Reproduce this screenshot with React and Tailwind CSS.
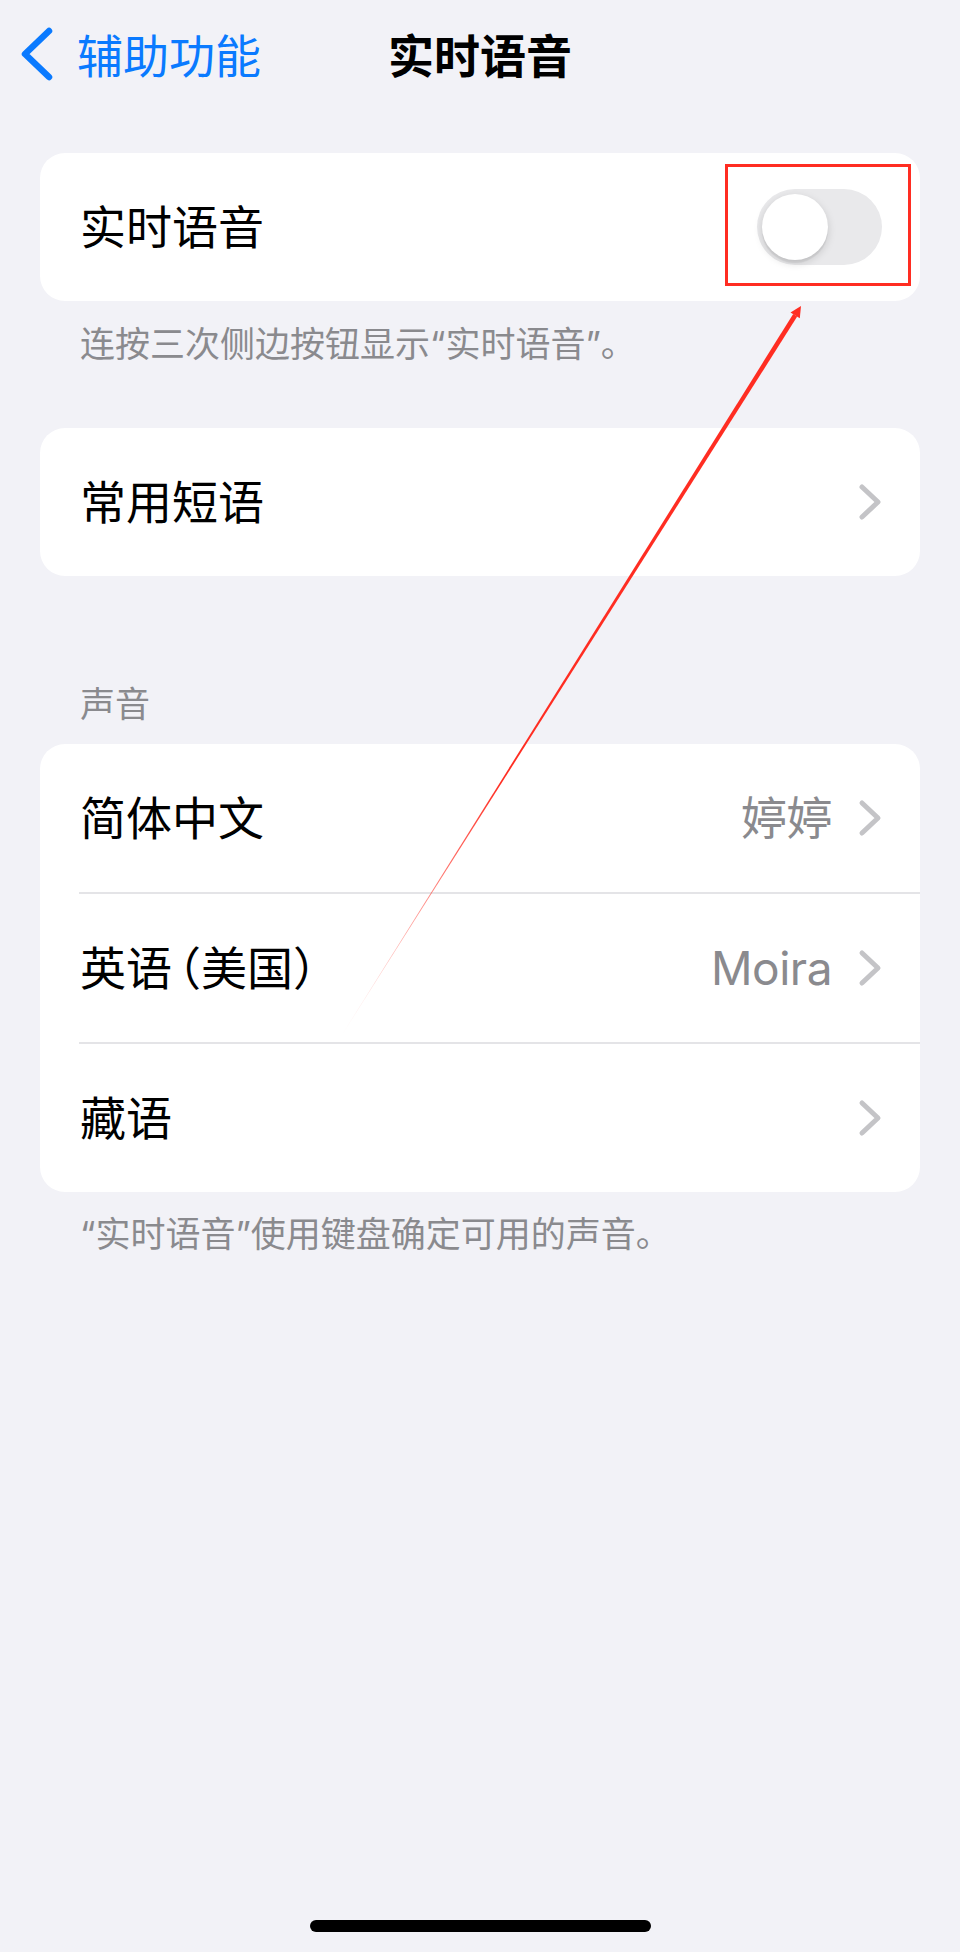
import React from "react";

const font = "font-['Inter','Noto_Sans_CJK_SC',sans-serif]";

function Chevron() {
  return (
    <svg width="24" height="40" viewBox="0 0 24 40" className="shrink-0">
      <polyline
        points="4,5 20,20 4,35"
        fill="none"
        stroke="#c4c4c7"
        strokeWidth="5"
        strokeLinecap="round"
        strokeLinejoin="round"
      />
    </svg>
  );
}

function Row({ label, value, last }) {
  return (
    <>
      <div className="flex h-[148px] items-center justify-between pl-[40px] pr-[38px]">
        <span className="text-[46px] leading-none text-black">{label}</span>
        <div className="flex items-center gap-[26px]">
          {value && (
            <span className="text-[46px] leading-none tracking-[-0.5px] text-[#8a8a8e]">{value}</span>
          )}
          <Chevron />
        </div>
      </div>
      {!last && <div className="ml-[39px] h-[2px] bg-[#e4e4e7]" />}
    </>
  );
}

function Toggle() {
  return (
    <div className="flex h-[76px] w-[125px] items-center rounded-full bg-[#e9e9eb] p-[5px]">
      <div className="h-[66px] w-[66px] rounded-full bg-white shadow-[0_3px_8px_rgba(0,0,0,0.15),0_3px_1px_rgba(0,0,0,0.06)]" />
    </div>
  );
}

export default function App() {
  return (
    <div className={`relative h-[1952px] w-[960px] overflow-hidden bg-[#f2f2f7] ${font}`}>
      {/* Nav bar */}
      <div className="grid h-[112px] grid-cols-[1fr_auto_1fr] items-center">
        <div className="flex items-center gap-[24px] pl-[21px]">
          <svg width="32" height="54" viewBox="0 0 32 54" className="-mt-[4px]">
            <polyline
              points="28,4 4,27 28,50"
              fill="none"
              stroke="#0a7aff"
              strokeWidth="6.5"
              strokeLinecap="round"
              strokeLinejoin="round"
            />
          </svg>
          <span className="text-[46px] leading-none text-[#0a7aff]">辅助功能</span>
        </div>
        <div className="text-[46px] font-semibold leading-none text-black">实时语音</div>
        <div />
      </div>

      <div className="px-[40px]">
        {/* Live speech toggle */}
        <div className="mt-[41px] flex h-[148px] items-center justify-between rounded-[25px] bg-white pl-[40px] pr-[38px]">
          <span className="text-[46px] leading-none text-black">实时语音</span>
          <Toggle />
        </div>
        <p className="mt-[22px] pl-[40px] text-[35px] leading-[42px] text-[#8a8a8e]">
          连按三次侧边按钮显示“实时语音”。
        </p>

        {/* Favourite phrases */}
        <div className="mt-[63px] overflow-hidden rounded-[25px] bg-white">
          <Row label="常用短语" last />
        </div>

        {/* Voices */}
        <p className="mt-[107px] pl-[40px] text-[35px] leading-[42px] text-[#8a8a8e]">声音</p>
        <div className="mt-[19px] overflow-hidden rounded-[25px] bg-white">
          <Row label="简体中文" value="婷婷" />
          <Row
            label={
              <>
                英语<span className="ml-[6px] [font-feature-settings:'halt']">（</span>美国）
              </>
            }
            value="Moira"
          />
          <Row label="藏语" last />
        </div>
        <p className="mt-[21px] pl-[40px] text-[35px] leading-[42px] text-[#8a8a8e]">
          “实时语音”使用键盘确定可用的声音。
        </p>
      </div>

      {/* annotation: red box + arrow */}
      <div className="absolute left-[725px] top-[164px] h-[122px] w-[186px] border-[3px] border-[#ff2d22]" />
      <svg className="pointer-events-none absolute left-0 top-0" width="960" height="1952">
        <defs>
          <linearGradient id="fade" gradientUnits="userSpaceOnUse" x1="800" y1="307" x2="340" y2="1038">
            <stop offset="0" stopColor="#ff2d22" stopOpacity="1" />
            <stop offset="0.65" stopColor="#ff2d22" stopOpacity="1" />
            <stop offset="1" stopColor="#ff2d22" stopOpacity="0.05" />
          </linearGradient>
        </defs>
        <polygon points="797.2,316.6 793.2,314 340,1038" fill="url(#fade)" />
        <polygon points="801,306 790.5,312.4 799.8,318.2" fill="#ff2d22" />
      </svg>

      {/* home indicator */}
      <div className="absolute bottom-[20px] left-[310px] h-[12px] w-[341px] rounded-full bg-black" />
    </div>
  );
}
